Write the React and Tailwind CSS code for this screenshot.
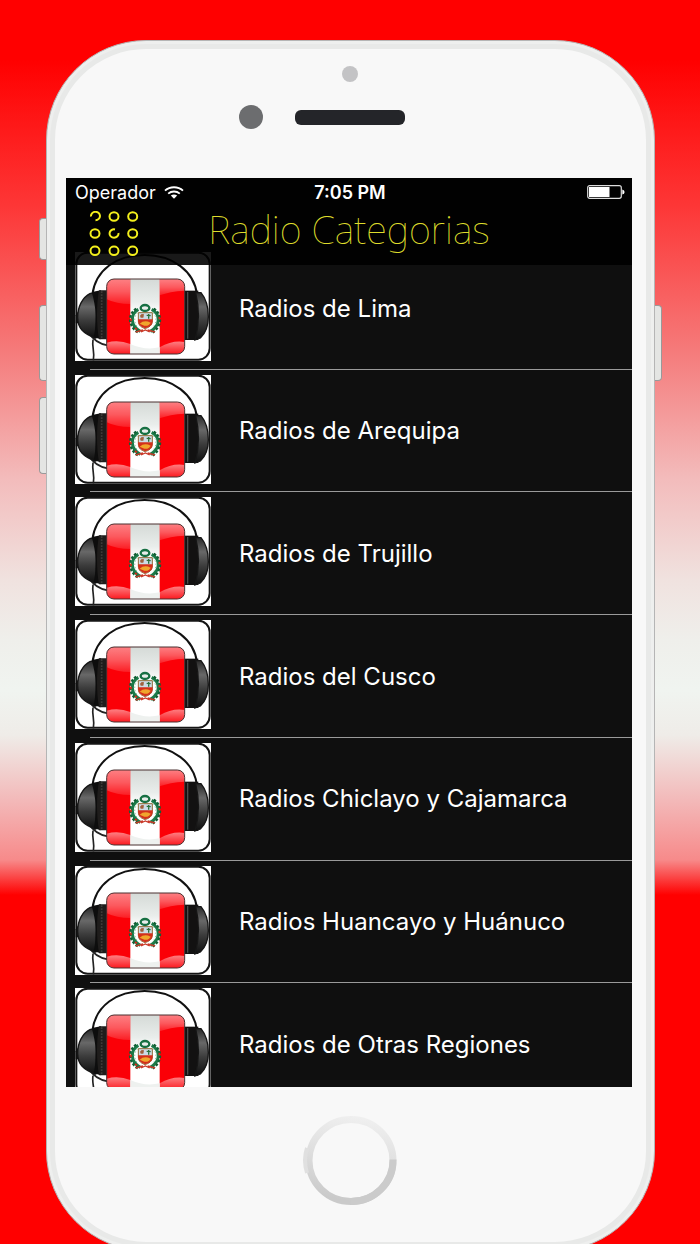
const categories = [
  "Radios de Lima",
  "Radios de Arequipa",
  "Radios de Trujillo",
  "Radios del Cusco",
  "Radios Chiclayo y Cajamarca",
  "Radios Huancayo y Huánuco",
  "Radios de Otras Regiones",
];

function Thumbnail() {
  return (
    <svg className="block h-[109px] w-[136px] shrink-0" viewBox="26 22 408 327" aria-hidden="true">
      <defs>
        <linearGradient id="cup" x1="0" x2="0" y1="0" y2="1">
          <stop offset="0" stopColor="#2a2a2a" />
          <stop offset="0.3" stopColor="#686868" />
          <stop offset="0.6" stopColor="#3c3c3c" />
          <stop offset="1" stopColor="#0e0e0e" />
        </linearGradient>
        <linearGradient id="stripe" x1="0" x2="0" y1="0" y2="1">
          <stop offset="0" stopColor="#d5dad7" />
          <stop offset="0.3" stopColor="#e9edeb" />
          <stop offset="0.45" stopColor="#fff" />
        </linearGradient>
        <linearGradient id="gloss" x1="0" x2="0" y1="0" y2="1">
          <stop offset="0" stopColor="#fff" stopOpacity="0.5" />
          <stop offset="0.5" stopColor="#fff" stopOpacity="0.35" />
          <stop offset="1" stopColor="#fff" stopOpacity="0.12" />
        </linearGradient>
        <linearGradient id="shine" x1="0" x2="0" y1="0" y2="1">
          <stop offset="0" stopColor="#fff" stopOpacity="0.5" />
          <stop offset="1" stopColor="#fff" stopOpacity="0.1" />
        </linearGradient>
        <clipPath id="badge">
          <rect x="121" y="103" width="234" height="225" rx="22" />
        </clipPath>
      </defs>
      <rect x="26" y="22" width="408" height="327" fill="#fff" />
      <rect x="30" y="24" width="400" height="321" rx="34" fill="none" stroke="#151515" strokeWidth="6" />
      <path d="M78 150C88 75 150 31 235 31S384 80 392 150" fill="none" stroke="#111" strokeWidth="6" />
      <path d="M66 262C78 282 98 298 124 302M80 285C76 310 86 318 81 347" fill="none" stroke="#222" strokeWidth="5" />
      {/* left ear cup */}
      <path d="M38 196L28 212V236L38 236Z" fill="#111" />
      <path d="M72 146C48 158 34 186 34 218S50 268 88 280L92 146Z" fill="url(#cup)" stroke="#161616" strokeWidth="4" />
      <path d="M76 142L104 137V284L82 278C92 234 90 188 76 142Z" fill="#0d0d0d" />
      <path d="M98 137H122V284H98C90 240 90 180 98 137Z" fill="#1f1d1c" />
      <path d="M106 140V282" stroke="#3e3b39" strokeWidth="5" strokeDasharray="5 4" />
      {/* right ear cup */}
      <path d="M354 138H396V286H354Z" fill="#121111" />
      <path d="M364 142V282" stroke="#4b4b4b" strokeWidth="4" />
      <path d="M388 144H404C419 162 426 188 426 216S419 264 402 280L386 286C399 240 399 188 388 144Z" fill="url(#cup)" stroke="#161616" strokeWidth="4" />
      {/* flag badge */}
      <g clipPath="url(#badge)">
        <rect x="121" y="103" width="234" height="225" fill="#fb0007" />
        <rect x="192" y="103" width="88" height="225" fill="url(#stripe)" />
        <path d="M121 103H192V178Q150 178 121 164Z" fill="url(#gloss)" />
        <path d="M280 103H355V138Q310 140 280 152Z" fill="url(#gloss)" />
        <path d="M121 294Q156 284 192 298V328H121ZM280 308Q318 286 355 292V328H280Z" fill="url(#shine)" />
        <path d="M192 298Q236 318 280 308V328H192Z" fill="#eef1ef" />
      </g>
      <rect x="121" y="103" width="234" height="225" rx="22" fill="none" stroke="#4a3030" strokeWidth="3" />
      {/* coat of arms */}
      <path d="M216 194C192 208 190 242 222 260M256 194C282 208 284 242 252 260" fill="none" stroke="#1a7a48" strokeWidth="9" />
      <path d="M210 192C184 208 184 244 216 264M262 192C288 208 288 244 258 264" fill="none" stroke="#125f34" strokeWidth="7" strokeDasharray="8 5" />
      <path d="M214 204C202 216 202 236 216 250M260 204C272 216 272 236 258 250" fill="none" stroke="#8ec7a2" strokeWidth="3" strokeDasharray="4 6" />
      <path d="M194 222V230M279 216V224M206 250L212 254" stroke="#d92716" strokeWidth="5" />
      <ellipse cx="236" cy="190" rx="13" ry="9" fill="#e9edeb" stroke="#177043" strokeWidth="7" />
      <path d="M216 204H258V228C258 244 246 248 237 252C226 248 216 244 216 228Z" fill="#ccdbe6" stroke="#8d6a35" strokeWidth="3" />
      <path d="M215 224H259C261 242 248 247 237 251C226 247 214 242 215 224Z" fill="#d3301b" />
      <path d="M220 237Q234 224 253 234Q248 245 234 243Z" fill="#f0a52c" />
      <path d="M221 213L226 208L233 209L231 219H223Z" fill="#a1603d" />
      <path d="M247 208V222M241 212L253 213" stroke="#29713c" strokeWidth="4" />
      <path d="M208 262L230 256M266 262L244 256M224 262L237 256L250 262" fill="none" stroke="#c93a2a" strokeWidth="4" />
    </svg>
  );
}

function WifiIcon() {
  return (
    <svg className="h-[13px] w-[20px]" viewBox="0 0 20 13" fill="none" aria-hidden="true">
      <path d="M1 4.6C6 0.2 14 0.2 19 4.6M4.2 7.6C7.5 4.8 12.5 4.8 15.8 7.6" stroke="#fff" strokeWidth="1.9" />
      <path d="M6.8 9.6Q10 7.2 13.2 9.6L10 12.8Z" fill="#fff" />
    </svg>
  );
}

function BatteryIcon() {
  return (
    <svg className="h-[14px] w-[38px]" viewBox="0 0 38 14" aria-hidden="true">
      <rect x="0.7" y="0.7" width="33.6" height="12.6" rx="2" fill="none" stroke="#ddd" strokeWidth="1.2" />
      <rect x="2" y="2" width="20.5" height="10" fill="#fff" />
      <path d="M35.3 4.5Q37.6 5 37.6 7T35.3 9.5Z" fill="#fff" />
    </svg>
  );
}

function MenuIcon() {
  return (
    <svg className="h-[45px] w-[50px]" viewBox="0 0 50 45" fill="none" stroke="#f4f01c" strokeWidth="2" aria-hidden="true">
      <path d="M2 5.5A4.5 4.2 0 1 1 6.5 9.2" />
      <ellipse cx="25" cy="5.5" rx="4.5" ry="4.2" />
      <ellipse cx="43.7" cy="5.5" rx="4.5" ry="4.2" />
      <ellipse cx="6" cy="22.5" rx="4.5" ry="4.2" />
      <path d="M26 18.4A4.5 4.2 0 1 0 29.5 22" />
      <ellipse cx="43.7" cy="22.5" rx="4.5" ry="4.2" />
      <ellipse cx="6" cy="39.7" rx="4.5" ry="4.2" />
      <ellipse cx="25" cy="39.7" rx="4.5" ry="4.2" />
      <ellipse cx="43.7" cy="39.7" rx="4.5" ry="4.2" />
    </svg>
  );
}

function HomeButton() {
  return (
    <button type="button" aria-label="Home" className="block">
      <svg className="h-[90px] w-[94px]" viewBox="0 0 94 90" fill="none" aria-hidden="true">
        <defs>
          <linearGradient id="ring" x1="0.7" x2="0.5" y1="0" y2="1">
            <stop offset="0" stopColor="#efefef" />
            <stop offset="0.5" stopColor="#dedede" />
            <stop offset="1" stopColor="#cacaca" />
          </linearGradient>
        </defs>
        <ellipse cx="48" cy="44.5" rx="42" ry="41" stroke="url(#ring)" strokeWidth="7" />
        <path d="M90 43.5A42 41 0 0 1 48 85.5" stroke="#cbcbcb" strokeWidth="7" />
        <path d="M4 32Q0 44 4 57" stroke="#e0e0e0" strokeWidth="4" />
      </svg>
    </button>
  );
}

export default function App() {
  return (
    <div className="h-[1244px] overflow-hidden bg-[linear-gradient(#ff0000_60px,#fd3636_205px,#f57a7a_350px,#f3bcbc_480px,#f0e2df_580px,#efefeb_640px,#f0f4f0_690px,#efece8_735px,#f3b9b9_800px,#f78a8a_860px,#ff0000_895px)] pt-10 pr-[45px] pl-[46px] font-['Inter',sans-serif]">
      <div className="relative">
        {/* side buttons */}
        <div className="absolute top-[178px] -left-[7px] h-[42px] w-2 rounded-l-sm border border-r-0 border-[#999] bg-[#e4e5e3]" />
        <div className="absolute top-[265px] -left-[7px] h-[76px] w-2 rounded-l-sm border border-r-0 border-[#999] bg-[#e4e5e3]" />
        <div className="absolute top-[357px] -left-[7px] h-[77px] w-2 rounded-l-sm border border-r-0 border-[#999] bg-[#e4e5e3]" />
        <div className="absolute top-[265px] -right-[7px] h-[76px] w-2 rounded-r-sm border border-l-0 border-[#999] bg-[#e4e5e3]" />

        <div className="relative rounded-[100px] border border-[#b5b5b5] bg-[#eeefee] p-[3px]">
          <div className="rounded-[96px] border-5 border-[#e8e9e8] bg-[#f8f8f8] pr-[14px] pb-9 pl-[11px]">
            <div className="flex h-[129px] flex-col items-center pt-[17px] pl-0.5">
              <div className="size-4 rounded-full bg-[#c3c3c5]" />
              <div className="mt-[23px] grid w-full grid-cols-[1fr_110px_1fr] items-center">
                <div className="mr-8 size-6 justify-self-end rounded-full bg-[#6c6d6f]" />
                <div className="h-[15px] rounded-md bg-[#242529]" />
              </div>
            </div>

            <main className="relative h-[909px] overflow-hidden bg-[#0f0f0f] text-white">
              <header className="absolute inset-x-0 top-0 z-10 h-[87px] bg-black/90">
                <div className="grid h-7 grid-cols-3 items-center pr-[7px] pl-[9px] text-[18px]">
                  <div className="flex items-center gap-2">
                    Operador
                    <WifiIcon />
                  </div>
                  <div className="text-center font-semibold">7:05 PM</div>
                  <div className="justify-self-end">
                    <BatteryIcon />
                  </div>
                </div>
                <div className="grid grid-cols-[50px_1fr_50px] items-start px-[23px]">
                  <button type="button" aria-label="Menu" className="pt-[5px]">
                    <MenuIcon />
                  </button>
                  <h1 className="text-center font-['Noto_Sans',sans-serif] text-[38px] leading-[46px] font-thin text-[#dedc2c]">
                    Radio Categorias
                  </h1>
                </div>
              </header>

              <ul className="mt-[69px] flex h-[859px] flex-col">
                {categories.map((name) => (
                  <li key={name} className="relative flex-1">
                    <a href="#" className="flex items-center gap-7 pt-[5px] pl-[9px] text-[24px] leading-8">
                      <Thumbnail />
                      <span className="pt-1">{name}</span>
                    </a>
                    <div className="absolute right-0 bottom-0 left-6 h-px bg-[#9a9a9a]" />
                  </li>
                ))}
              </ul>
            </main>

            <div className="flex justify-center pt-[29px] pl-0.5">
              <HomeButton />
            </div>
          </div>
        </div>
      </div>
    </div>
  );
}
